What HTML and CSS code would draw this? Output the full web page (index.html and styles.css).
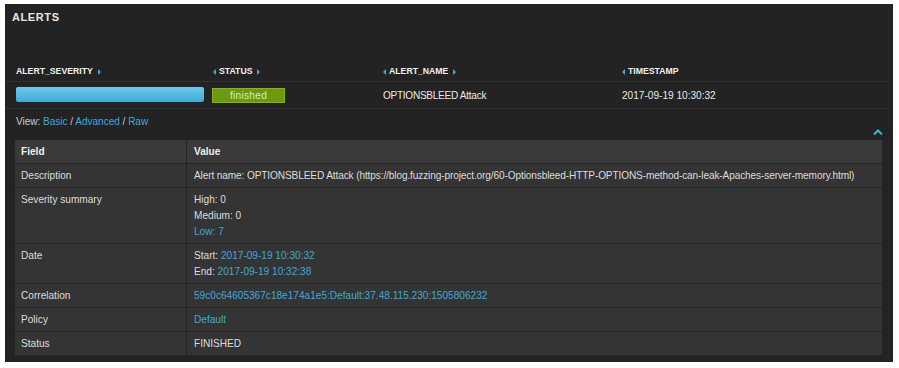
FILE: index.html
```html
<!DOCTYPE html>
<html lang="en">
<head>
    <meta charset="utf-8">
    <link rel="stylesheet" href="styles.css">
</head>
<body>
    <!--Alerts panel-->
    <div class="panel">
        <div class="panel-title">ALERTS</div>

        <!--Alert list-->
        <div class="alert-row alert-head">
            <div><span>ALERT_SEVERITY</span><i class="tri tri-right"></i></div>
            <div><i class="tri tri-left"></i><span>STATUS</span><i class="tri tri-right"></i></div>
            <div><i class="tri tri-left"></i><span>ALERT_NAME</span><i class="tri tri-right"></i></div>
            <div><i class="tri tri-left"></i><span>TIMESTAMP</span></div>
        </div>
        <div class="alert-row alert-data">
            <div><div class="severity-bar"></div></div>
            <div><div class="status-badge">finished</div></div>
            <div class="alert-name">OPTIONSBLEED Attack</div>
            <div>2017-09-19 10:30:32</div>
        </div>

        <!--View switch-->
        <div class="view-line">
            View: <a>Basic</a> / <a>Advanced</a> / <a>Raw</a>
        </div>
        <div class="collapse-line">
            <svg width="10" height="6" viewBox="0 0 10 6"><path d="M1 5.5 L5 1.5 L9 5.5" fill="none" stroke="#3fb0e0" stroke-width="2"/></svg>
        </div>

        <!--Detail table-->
        <table class="details">
            <thead>
                <tr><th class="field">Field</th><th>Value</th></tr>
            </thead>
            <tbody>
                <tr>
                    <td class="field">Description</td>
                    <td class="desc">Alert name: OPTIONSBLEED Attack (https://blog.fuzzing-project.org/60-Optionsbleed-HTTP-OPTIONS-method-can-leak-Apaches-server-memory.html)</td>
                </tr>
                <tr>
                    <td class="field">Severity summary</td>
                    <td>High: 0<br>Medium: 0<br><a>Low: 7</a></td>
                </tr>
                <tr>
                    <td class="field">Date</td>
                    <td>Start: <a>2017-09-19 10:30:32</a><br>End: <a>2017-09-19 10:32:38</a></td>
                </tr>
                <tr>
                    <td class="field">Correlation</td>
                    <td><a>59c0c64605367c18e174a1e5:Default:37.48.115.230:1505806232</a></td>
                </tr>
                <tr>
                    <td class="field">Policy</td>
                    <td><a>Default</a></td>
                </tr>
                <tr>
                    <td class="field">Status</td>
                    <td>FINISHED</td>
                </tr>
            </tbody>
        </table>
    </div>
</body>
</html>
```

FILE: styles.css
```css
body{
    margin: 0;
    background-color: #fff;
    font-family: "Liberation Sans", Arial, sans-serif;
    font-size: 11px;
    color: #ddd;
}
a{
    color: #3ea9d8;
    cursor: pointer;
}
.panel{
    width: 888px;
    height: 358px;
    margin: 4px 0 0 5px;
    background-color: #232323;
    box-sizing: border-box;
    overflow: hidden;
}
.panel-title{
    padding: 6px 7px 0;
    line-height: 14px;
    font-weight: bold;
    letter-spacing: 0.6px;
    color: #e6e6e6;
}
.alert-row{
    display: grid;
    grid-template-columns: 197px 170px 239px 1fr;
    margin-right: 6px;
    padding-left: 11px;
    border-bottom: 1px solid #303030;
}
.alert-head{
    margin-top: 38px;
    height: 19px;
    line-height: 19px;
    font-size: 8.7px;
    font-weight: bold;
    color: #f0f0f0;
}
.alert-head div{
    display: flex;
    align-items: center;
    gap: 3px;
}
.tri{
    width: 0;
    height: 0;
    border-top: 3px solid transparent;
    border-bottom: 3px solid transparent;
}
.tri-right{
    border-left: 3px solid #3ea9d8;
    margin-left: 2px;
}
.tri-left{
    border-right: 3px solid #3ea9d8;
}
.alert-data{
    height: 26px;
    align-items: center;
    font-size: 10.1px;
    color: #e8e8e8;
}
.alert-name{
    letter-spacing: -0.3px;
}
.severity-bar{
    width: 188px;
    height: 15px;
    margin-top: -1px;
    border-radius: 2px;
    background: linear-gradient(#6fcbec, #3fa9d4);
}
.status-badge{
    width: 71px;
    height: 13px;
    line-height: 13px;
    margin-left: -1px;
    border: 1px solid #86b41c;
    background-color: #6c9a0e;
    text-align: center;
    color: #d8e8c0;
    letter-spacing: 0.3px;
}
.view-line{
    padding: 6px 11px 0;
    line-height: 14px;
    font-size: 10px;
    color: #ccc;
}
.collapse-line{
    display: flex;
    justify-content: flex-end;
    height: 11px;
    padding-right: 10px;
}
.details{
    width: 868px;
    margin-left: 10px;
    border-collapse: collapse;
    background-color: #343434;
    font-size: 10.1px;
    line-height: 16px;
    color: #ddd;
}
.details th, .details td{
    border: 1px solid #242424;
    border-top: none;
    padding: 4px 6px 3px 7px;
    text-align: left;
    vertical-align: top;
    white-space: nowrap;
}
.details th{
    padding: 4px 6px 3px 7px;
    background-color: #3a3a3a;
    font-weight: bold;
    color: #eee;
}
.details .desc{
    letter-spacing: -0.12px;
}
.details .field{
    width: 159px;
}
.details tr > :first-child{
    border-left: none;
    padding-left: 6px;
}
```
